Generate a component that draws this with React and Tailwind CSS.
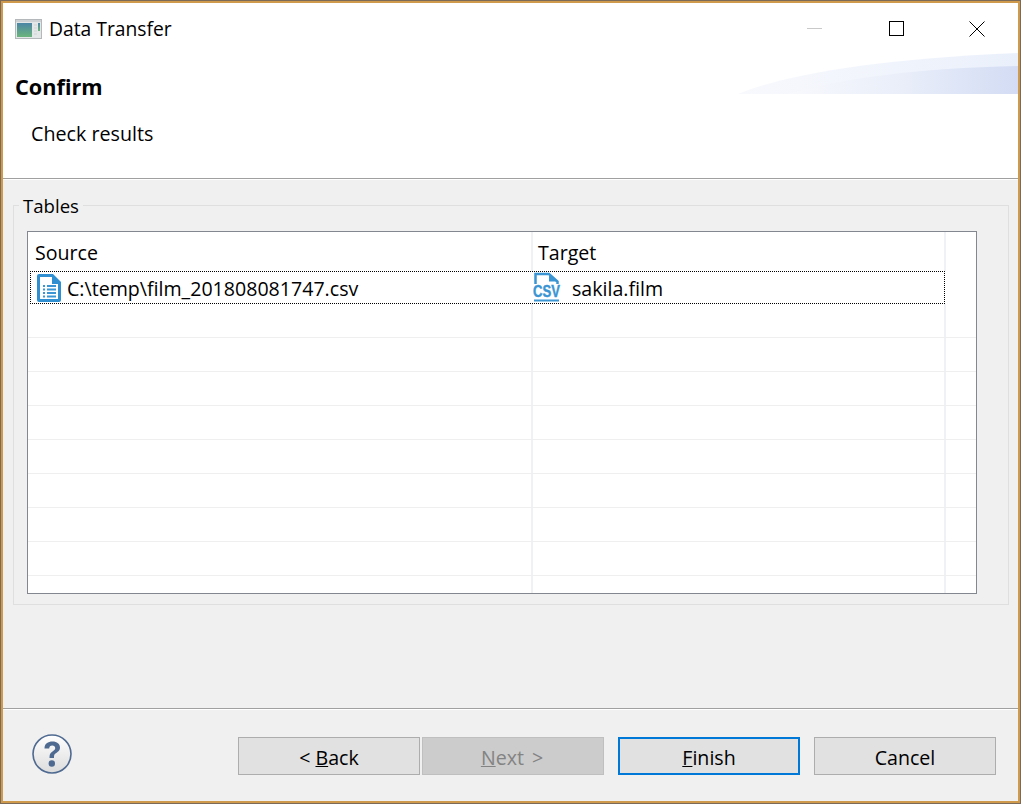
import React from "react";

const FONT = "font-['Open_Sans','Noto_Sans',sans-serif]";

function DialogIcon() {
  return (
    <svg width="27" height="20" viewBox="0 0 27 20" className="shrink-0">
      <defs>
        <linearGradient id="dlg" x1="0" y1="0" x2="0" y2="1">
          <stop offset="0" stopColor="#4a86a6" />
          <stop offset="1" stopColor="#6cb47c" />
        </linearGradient>
      </defs>
      <rect x="0.5" y="0.5" width="26" height="19" fill="#e4e7e8" stroke="#b4b8bb" />
      <rect x="1" y="1" width="25" height="2" fill="#cdd1d4" />
      <rect x="2" y="4" width="15" height="14" fill="url(#dlg)" />
      <path d="M19 6h3M19 9h3M19 12h3M19 15h3" stroke="#cfd3d3" strokeWidth="1" />
      <rect x="23" y="4" width="2" height="8" fill="url(#dlg)" />
    </svg>
  );
}

function Swoosh() {
  return (
    <svg width="280" height="41" viewBox="0 0 280 41" className="absolute right-0 bottom-0">
      <defs>
        <linearGradient id="sw1" x1="0" y1="0" x2="1" y2="0">
          <stop offset="0" stopColor="#f8f9fd" />
          <stop offset="1" stopColor="#eaf0fb" />
        </linearGradient>
        <linearGradient id="sw2" x1="0" y1="0" x2="1" y2="0">
          <stop offset="0" stopColor="#f8f9fd" />
          <stop offset="0.5" stopColor="#e9eef9" />
          <stop offset="1" stopColor="#d3dcf4" />
        </linearGradient>
      </defs>
      <path d="M0 41 C40 24 130 6 280 0 L280 41 Z" fill="url(#sw1)" />
      <path d="M50 41 C100 26 180 15 280 13 L280 41 Z" fill="url(#sw2)" />
    </svg>
  );
}

function FileIcon() {
  return (
    <svg width="26" height="30" viewBox="0 0 26 30" className="shrink-0">
      <path d="M3 1 H17 L25 9 V27 a2 2 0 0 1 -2 2 H3 a2 2 0 0 1 -2 -2 V3 a2 2 0 0 1 2 -2 Z" fill="#2f8fd0" />
      <path d="M4 4 H16 V11 H22 V26 H4 Z" fill="#ffffff" />
      <path d="M7 13h2M11 13h9M7 16.500h2M11 16.500h9M7 20h2M11 20h9M7 23.500h2M11 23.500h9" stroke="#3b95d3" strokeWidth="2" />
    </svg>
  );
}

function CsvIcon() {
  return (
    <svg width="30" height="32" viewBox="0 0 30 32" className="shrink-0 overflow-visible">
      <path d="M3.500 12 V2 H17 L25.500 9.500 V12" fill="none" stroke="#3b95d3" strokeWidth="2.500" />
      <path d="M17 2 V9.500 H25.500 Z" fill="#3b95d3" />
      <text
        x="1"
        y="25"
        fontSize="16"
        fontWeight="700"
        fill="#3b95d3"
        stroke="#3b95d3"
        strokeWidth="0.400"
        fontFamily="'Liberation Sans', sans-serif"
        textLength="27"
        lengthAdjust="spacingAndGlyphs"
      >
        CSV
      </text>
      <rect x="2" y="27.500" width="25" height="2" fill="#3b95d3" />
    </svg>
  );
}

function HelpIcon() {
  return (
    <svg width="40" height="40" viewBox="0 0 40 40">
      <defs>
        <linearGradient id="hlp" x1="0" y1="0" x2="0" y2="1">
          <stop offset="0" stopColor="#ffffff" />
          <stop offset="1" stopColor="#dcdcdc" />
        </linearGradient>
      </defs>
      <circle cx="20" cy="20" r="19" fill="url(#hlp)" stroke="#4f6a91" strokeWidth="1.600" />
      <path d="M12.500 14.500 C12.500 9.500 16 7.500 20.500 7.500 C25 7.500 28 10 28 13.500 C28 17 25.500 18 23.500 19.500 C22 20.500 22 21.500 22 24 H17.500 C17.500 20.500 18 19 20.500 17.500 C22.500 16.200 23.200 15.500 23.200 14 C23.200 12.500 22 11.500 20.300 11.500 C18.300 11.500 17.300 12.800 17.200 14.500 Z" fill="#4f6a91" />
      <circle cx="19.800" cy="29.500" r="3.200" fill="#4f6a91" />
    </svg>
  );
}

function WizardButton({ children, disabled, focused }) {
  const state = disabled
    ? "bg-[#cccccc] border-[#bfbfbf] text-[#838383]"
    : focused
      ? "bg-[#e1e1e1] border-2 border-[#0078d7] text-black"
      : "bg-[#e1e1e1] border-[#adadad] text-black";
  return (
    <button className={`w-[182px] h-[38px] border flex items-center justify-center pt-[4px] text-[19.6px] ${state}`}>
      {children}
    </button>
  );
}

function EmptyRow() {
  return (
    <div className="grid grid-cols-[505px_413px_1fr] h-[34px] shrink-0 border-b border-[#efefef] box-border">
      <div className="border-r-2 border-[#eff1f5]" />
      <div className="border-r-2 border-[#eff1f5]" />
      <div />
    </div>
  );
}

export default function App() {
  return (
    <div className={`w-[1021px] h-[804px] flex flex-col bg-[#f0f0f0] border border-[#7c6a58] overflow-hidden ${FONT}`}>
      <div className="flex flex-col flex-1 border-2 border-[#d09a4c] min-h-0">
        {/* title + banner */}
        <div className="bg-white h-[175px] shrink-0 flex flex-col">
          <div className="h-[46px] shrink-0 flex items-center pl-[12px] pt-[5px]">
            <DialogIcon />
            <span className="ml-[7px] text-[19.3px] text-black leading-none">Data Transfer</span>
            <div className="ml-auto flex items-center h-full">
              <div className="w-[15px] h-px bg-[#c9c9c9]" />
              <div className="ml-[67px] w-[15px] h-[15px] border border-black" />
              <svg width="16" height="16" viewBox="0 0 16 16" className="ml-[65px] mr-[33px]">
                <path d="M0.500 0.500 L15.500 15.500 M15.500 0.500 L0.500 15.500" stroke="#000" strokeWidth="1" />
              </svg>
            </div>
          </div>
          <div className="relative h-[45px] shrink-0 pl-[12px] pt-[27px]">
            <div className="text-[21.7px] font-bold text-black leading-none">Confirm</div>
            <Swoosh />
          </div>
          <div className="pl-[28px] pt-[30px] text-[19.7px] text-black leading-none">Check results</div>
        </div>
        <div className="h-px bg-[#a0a0a0] shrink-0" />
        <div className="h-px bg-white shrink-0" />

        {/* group box */}
        <div className="relative mt-[25px] ml-[10px] mr-[9px] h-[400px] border border-[#dfdfdf] shrink-0 px-[13px] pt-[25px]">
          <span className="absolute -top-[12px] left-[5px] bg-[#f0f0f0] px-[4px] text-[18.6px] leading-[24px] text-black">Tables</span>
          <div className="w-[950px] h-[363px] bg-white border border-[#828790] overflow-hidden flex flex-col">
            <div className="grid grid-cols-[505px_413px_1fr] h-[39px] shrink-0 text-[19.6px] text-black">
              <div className="border-r-2 border-[#eff1f5] pl-[7px] pt-[8px] leading-[26px]">Source</div>
              <div className="border-r-2 border-[#eff1f5] pl-[5px] pt-[8px] leading-[26px]">Target</div>
              <div />
            </div>
            <div className="ml-[2px] w-[915px] h-[33px] shrink-0 border border-dotted border-black flex items-center text-[19.6px] text-black">
              <div className="w-[501px] flex items-center pl-[5px] gap-[5px]">
                <FileIcon />
                <span className="pt-[2px]">C:\temp\film_201808081747.csv</span>
              </div>
              <div className="flex items-center">
                <CsvIcon />
                <span className="ml-[10px] pt-[2px]">sakila.film</span>
              </div>
            </div>
            {[0, 1, 2, 3, 4, 5, 6, 7, 8].map((i) => (
              <EmptyRow key={i} />
            ))}
          </div>
        </div>

        <div className="flex-1" />
        <div className="h-px bg-[#a0a0a0] shrink-0" />
        <div className="h-px bg-white shrink-0" />

        {/* button bar */}
        <div className="h-[91px] shrink-0 flex items-start pt-[27px] pl-[29px]">
          <div className="-mt-[3px]">
            <HelpIcon />
          </div>
          <div className="ml-[166px] flex">
            <WizardButton>&lt; <u className="ml-[5px]">B</u>ack</WizardButton>
            <div className="ml-[2px]">
              <WizardButton disabled><span className="-ml-[2px] mr-[2px]"><u>N</u>ext</span><span className="ml-[6px]">&gt;</span></WizardButton>
            </div>
            <div className="ml-[14px]">
              <WizardButton focused><u>F</u>inish</WizardButton>
            </div>
            <div className="ml-[14px]">
              <WizardButton>Cancel</WizardButton>
            </div>
          </div>
        </div>
      </div>
    </div>
  );
}
